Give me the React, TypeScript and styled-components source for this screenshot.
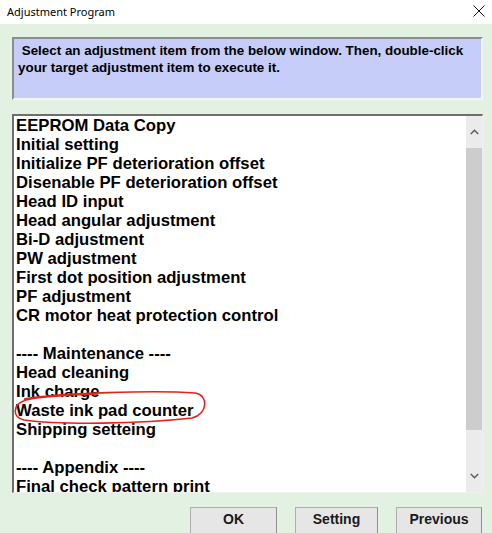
import { createGlobalStyle } from "styled-components";
import styled from "styled-components";

const GlobalStyle = createGlobalStyle`
  html, body {
    margin: 0;
    padding: 0;
    background: #e3f1e2;
  }
`;

const Window = styled.div`
  position: relative;
  width: 492px;
  height: 533px;
  overflow: hidden;
  background: #e3f1e2;
  font-family: "Liberation Sans", Arial, sans-serif;
  display: flex;
  flex-direction: column;
`;

const TitleBar = styled.div`
  height: 24px;
  flex: none;
  background: #ffffff;
  display: flex;
  align-items: center;
  justify-content: space-between;
  padding: 0 6px 2px 7px;
  box-sizing: border-box;
  font-family: "Noto Sans", "Liberation Sans", sans-serif;
  font-size: 11px;
  color: #000;
`;

const CloseBox = styled.div`
  width: 14px;
  height: 14px;
  display: flex;
  align-items: center;
  justify-content: center;
`;

const Body = styled.div`
  flex: 1;
  display: flex;
  flex-direction: column;
  padding: 13px 9px 0 12px;
  gap: 14px;
`;

const InfoBox = styled.div`
  height: 63px;
  box-sizing: border-box;
  background: #c6cdf8;
  border-top: 2px solid #8c8c8c;
  border-left: 2px solid #8c8c8c;
  border-right: 2px solid #f4f4f4;
  border-bottom: 2px solid #f4f4f4;
  padding: 3px 4px 0 4px;
  font-size: 13.4px;
  font-weight: bold;
  line-height: 17px;
  color: #000;
`;

const ListBox = styled.div`
  height: 379px;
  box-sizing: border-box;
  background: #ffffff;
  border-top: 2px solid #6e6e6e;
  border-left: 2px solid #6e6e6e;
  border-right: 1px solid #f0f0f0;
  border-bottom: 1px solid #f0f0f0;
  display: flex;
  overflow: hidden;
`;

const Items = styled.div`
  flex: 1;
  padding-left: 2px;
  overflow: hidden;
`;

const Item = styled.div`
  height: 19px;
  line-height: 19px;
  font-size: 16.7px;
  font-weight: bold;
  color: #000;
  white-space: nowrap;
`;

const ScrollBar = styled.div`
  width: 16px;
  flex: none;
  background: #ebebeb;
  display: flex;
  flex-direction: column;
  align-items: stretch;
`;

const Arrow = styled.div`
  height: 32px;
  display: flex;
  align-items: center;
  justify-content: center;
  flex: none;
`;

const Thumb = styled.div`
  height: 282px;
  background: #cdcdcd;
  flex: none;
`;

const Track = styled.div`
  flex: 1;
`;

const Buttons = styled.div`
  display: flex;
  justify-content: flex-end;
  gap: 18px;
  padding-right: 1px;
`;

const Btn = styled.button<{ $w: number }>`
  width: ${(p) => p.$w}px;
  height: 28px;
  background: #e6e6e6;
  border: 1px solid #adadad;
  border-right-color: #8f8f8f;
  border-bottom-color: #8f8f8f;
  font-family: "Liberation Sans", Arial, sans-serif;
  font-weight: bold;
  font-size: 14px;
  color: #1a1a1a;
  padding: 0 0 4px 0;
`;

const Annotation = styled.svg`
  position: absolute;
  left: 0;
  top: 0;
  pointer-events: none;
`;

const items = [
  "EEPROM Data Copy",
  "Initial setting",
  "Initialize PF deterioration offset",
  "Disenable PF deterioration offset",
  "Head ID input",
  "Head angular adjustment",
  "Bi-D adjustment",
  "PW adjustment",
  "First dot position adjustment",
  "PF adjustment",
  "CR motor heat protection control",
  "",
  "---- Maintenance ----",
  "Head cleaning",
  "Ink charge",
  "Waste ink pad counter",
  "Shipping setteing",
  "",
  "---- Appendix ----",
  "Final check pattern print",
];

export default function App() {
  return (
    <Window>
      <GlobalStyle />
      <TitleBar>
        <span>Adjustment Program</span>
        <CloseBox>
          <svg width="12" height="12" viewBox="0 0 12 12">
            <path d="M0.5 0.5 L11.5 11.5 M11.5 0.5 L0.5 11.5" stroke="#111" strokeWidth="1" />
          </svg>
        </CloseBox>
      </TitleBar>
      <Body>
        <InfoBox>
          &nbsp;Select an adjustment item from the below window. Then, double-click
          <br />
          your target adjustment item to execute it.
        </InfoBox>
        <ListBox>
          <Items>
            {items.map((t, i) => (
              <Item key={i}>{t || "\u00a0"}</Item>
            ))}
          </Items>
          <ScrollBar>
            <Arrow>
              <svg width="9" height="6" viewBox="0 0 9 6">
                <path d="M0.8 5 L4.5 1.3 L8.2 5" fill="none" stroke="#606060" strokeWidth="1.6" />
              </svg>
            </Arrow>
            <Thumb />
            <Track />
            <Arrow>
              <svg width="9" height="6" viewBox="0 0 9 6">
                <path d="M0.8 1 L4.5 4.7 L8.2 1" fill="none" stroke="#606060" strokeWidth="1.6" />
              </svg>
            </Arrow>
          </ScrollBar>
        </ListBox>
        <Buttons>
          <Btn $w={87}>OK</Btn>
          <Btn $w={83}>Setting</Btn>
          <Btn $w={86}>Previous</Btn>
        </Buttons>
      </Body>
      <Annotation width="492" height="533" viewBox="0 0 492 533">
        <path
          d="M24 399 C60 393 155 390 195 393 C209 395 208 414 192 418 C140 424 60 425 24 420 C12 418 12 404 26 400 C42 396 70 395 98 394"
          fill="none"
          stroke="#e2231a"
          strokeWidth="1.6"
        />
      </Annotation>
    </Window>
  );
}
